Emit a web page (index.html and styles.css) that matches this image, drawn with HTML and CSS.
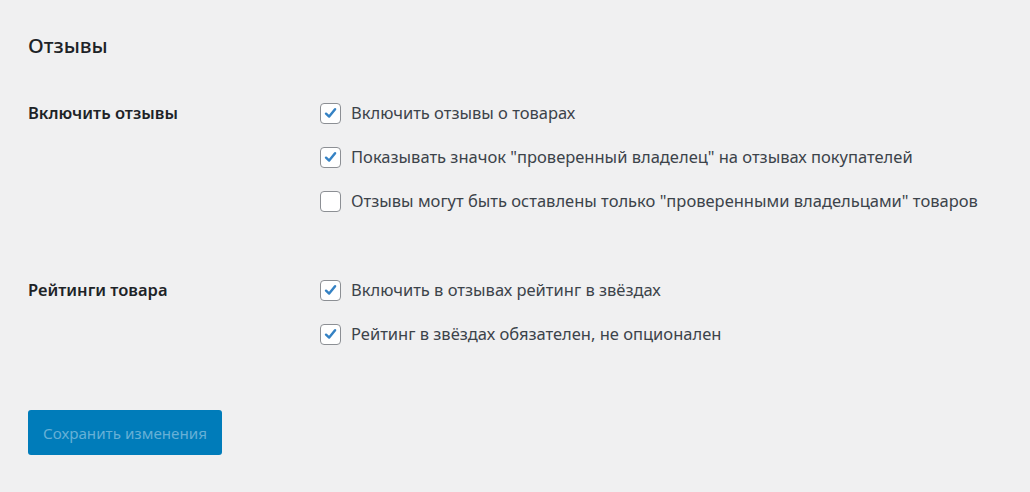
FILE: index.html
```html
<!DOCTYPE html>
<html lang="ru">
<head>
<meta charset="utf-8">
<title>Отзывы</title>
<link rel="stylesheet" href="styles.css">
</head>
<body>
<div class="wrap">
  <h2 class="title">Отзывы</h2>
  <div class="form">
    <div class="row">
      <div class="label">Включить отзывы</div>
      <div class="options">
        <label class="opt"><span class="cb checked"><svg viewBox="0 0 20 20"><path d="M14.8 5.6 8.6 13.2 5.3 10.2" /></svg></span><span class="txt">Включить отзывы о товарах</span></label>
        <label class="opt"><span class="cb checked"><svg viewBox="0 0 20 20"><path d="M14.8 5.6 8.6 13.2 5.3 10.2" /></svg></span><span class="txt">Показывать значок "проверенный владелец" на отзывах покупателей</span></label>
        <label class="opt"><span class="cb"></span><span class="txt">Отзывы могут быть оставлены только "проверенными владельцами" товаров</span></label>
      </div>
    </div>
    <div class="row">
      <div class="label">Рейтинги товара</div>
      <div class="options">
        <label class="opt"><span class="cb checked"><svg viewBox="0 0 20 20"><path d="M14.8 5.6 8.6 13.2 5.3 10.2" /></svg></span><span class="txt">Включить в отзывах рейтинг в звёздах</span></label>
        <label class="opt"><span class="cb checked"><svg viewBox="0 0 20 20"><path d="M14.8 5.6 8.6 13.2 5.3 10.2" /></svg></span><span class="txt">Рейтинг в звёздах обязателен, не опционален</span></label>
      </div>
    </div>
  </div>
  <div class="actions">
    <button class="btn" type="button">Сохранить изменения</button>
  </div>
</div>
</body>
</html>
```
FILE: styles.css
```css
html, body {
  margin: 0;
  padding: 0;
  background: #f0f0f1;
}
body {
  font-family: "Noto Sans", "Open Sans", sans-serif;
  color: #1d2327;
  font-size: 16.5px;
}
.wrap {
  padding: 30px 28px 0 28px;
}
.title {
  margin: 0;
  font-size: 20.5px;
  font-weight: 500;
  line-height: 30px;
  height: 30px;
}
.form {
  margin-top: 41px;
  display: flex;
  flex-direction: column;
  gap: 65px;
}
.row {
  display: grid;
  grid-template-columns: 292px 1fr;
}
.label {
  font-weight: 600;
  line-height: 24px;
  height: 24px;
}
.options {
  display: flex;
  flex-direction: column;
  gap: 20px;
}
.opt {
  display: flex;
  align-items: center;
  height: 24px;
  line-height: 24px;
}
.cb {
  width: 19px;
  height: 19px;
  border: 1px solid #8c8f94;
  border-radius: 4px;
  background: #fff;
  margin-right: 10px;
  display: flex;
  align-items: center;
  justify-content: center;
  flex: none;
}
.cb svg {
  width: 19px;
  height: 19px;
}
.cb svg path {
  fill: none;
  stroke: #3582c4;
  stroke-width: 2.6;
  stroke-linecap: round;
  stroke-linejoin: round;
}
.txt {
  color: #3c434a;
}
.actions {
  margin-top: 64px;
}
.btn {
  font-family: inherit;
  font-size: 15.2px;
  width: 194px;
  height: 45px;
  background: #007cba;
  color: #66b0d6;
  border: 0;
  border-radius: 3px;
  padding: 0;
}
```
